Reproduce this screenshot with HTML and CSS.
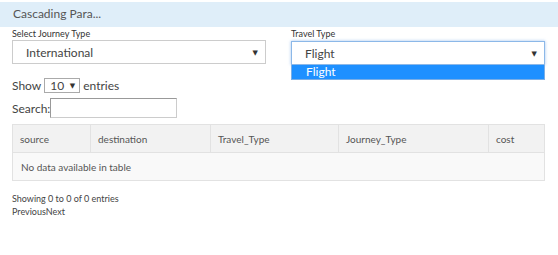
FILE: index.html
```html
<!DOCTYPE html>
<html lang="en">
<head>
  <meta charset="UTF-8" />
  <title>Cascading Parameters</title>
  <link rel="stylesheet" href="styles.css">
</head>
<body>
  <div class="header">Cascading Para...</div>

  <div class="filters">
    <div class="field">
      <div class="field-label">Select Journey Type</div>
      <div class="select">
        <span>International</span>
        <span class="arrow">▼</span>
      </div>
    </div>
    <div class="field">
      <div class="field-label">Travel Type</div>
      <div class="select focused">
        <span>Flight</span>
        <span class="arrow">▼</span>
      </div>
      <div class="dropdown">
        <div class="option selected">Flight</div>
      </div>
    </div>
  </div>

  <div class="length">
    Show
    <span class="small-select">10 <span class="arrow">▼</span></span>
    entries
  </div>

  <div class="search">
    Search:<span class="search-input"></span>
  </div>

  <table class="data-table">
    <thead>
      <tr>
        <th class="col-source">source</th>
        <th class="col-dest">destination</th>
        <th class="col-travel">Travel_Type</th>
        <th class="col-journey">Journey_Type</th>
        <th>cost</th>
      </tr>
    </thead>
    <tbody>
      <tr>
        <td colspan="5">No data available in table</td>
      </tr>
    </tbody>
  </table>

  <div class="info">Showing 0 to 0 of 0 entries</div>
  <div class="paging"><span>Previous</span><span>Next</span></div>
</body>
</html>
```

FILE: styles.css
```css
* {
  box-sizing: border-box;
  margin: 0;
  padding: 0;
}

html, body {
  background: white;
  font-family: Lato, "DejaVu Sans", sans-serif;
  color: #444;
}

body {
  width: 558px;
  height: 255px;
  overflow: hidden;
}

.header {
  margin-top: 2px;
  height: 25px;
  line-height: 24px;
  padding-left: 13px;
  background: #dfeef9;
  font-size: 12px;
  color: #555;
}

.filters {
  display: grid;
  grid-template-columns: 254px 254px;
  gap: 25px;
  padding: 0 12px;
}

.field {
  position: relative;
}

.field-label {
  font-size: 9px;
  color: #333;
  height: 13px;
  line-height: 12px;
  padding-top: 1px;
}

.select {
  display: flex;
  justify-content: space-between;
  align-items: center;
  height: 24px;
  padding: 0 7px 0 13px;
  border: 1px solid #ccc;
  font-size: 12px;
  color: #444;
}

.select.focused {
  margin-top: 1px;
  border-color: #8cb8e8;
  box-shadow: 0 0 3px rgba(102, 160, 230, 0.6);
}

.arrow {
  font-size: 7px;
  color: #333;
}

.dropdown {
  position: absolute;
  left: 0;
  right: 0;
  top: 38px;
  border: 1px solid #7aaee6;
  border-top: none;
  background: white;
}

.option {
  height: 14px;
  line-height: 13px;
  padding-left: 14px;
  font-size: 12px;
}

.option.selected {
  background: #1e90ff;
  color: white;
}

.length {
  display: flex;
  align-items: center;
  gap: 3px;
  margin-top: 13px;
  padding-left: 12px;
  font-size: 12px;
  color: #444;
}

.small-select {
  display: flex;
  justify-content: space-between;
  align-items: center;
  width: 36px;
  height: 15px;
  padding: 0 4px 0 5px;
  border: 1px solid #aaa;
  font-size: 12px;
  line-height: 13px;
}

.search {
  display: flex;
  align-items: center;
  margin-top: 5px;
  padding-left: 12px;
  font-size: 12px;
  color: #444;
}

.search-input {
  display: block;
  width: 127px;
  height: 20px;
  border: 1px solid #aaa;
  border-color: #999 #ccc #ccc #999;
}

.data-table {
  margin: 6px 0 0 12px;
  width: 533px;
  border-collapse: collapse;
  font-size: 10px;
  color: #555;
}

.data-table th {
  height: 28px;
  padding: 0 0 0 7px;
  text-align: left;
  font-weight: normal;
  background: #f2f2f2;
  border: 1px solid #e2e2e2;
}

.data-table td {
  height: 28px;
  padding: 0 0 0 8px;
  background: #f9f9f9;
  border: 1px solid #e2e2e2;
}

.col-source { width: 78px; }
.col-dest { width: 120px; }
.col-travel { width: 128px; }
.col-journey { width: 150px; }

.info {
  margin-top: 12px;
  padding-left: 12px;
  font-size: 9px;
  color: #444;
}

.paging {
  margin-top: 2px;
  padding-left: 12px;
  font-size: 9px;
  color: #444;
}
```
